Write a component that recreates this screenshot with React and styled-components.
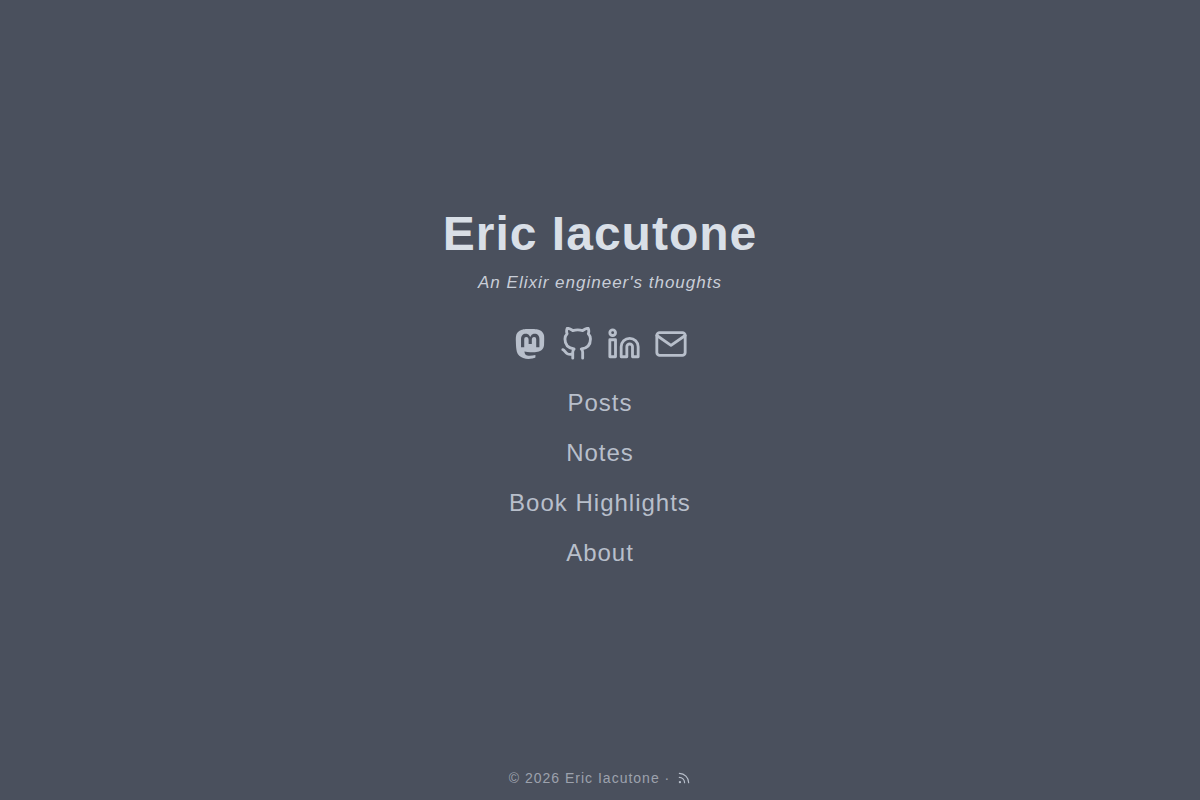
import React from 'react'
import styled, { createGlobalStyle } from 'styled-components'
import { FiGithub, FiLinkedin, FiMail, FiRss } from 'react-icons/fi'
import { SiMastodon } from 'react-icons/si'

const Color = {
  Background: '#4a505d',
  Title: '#d9dfe7',
  Tagline: '#c9ced8',
  Link: '#b8bfcb',
  Footer: '#9da2ad',
}

const GlobalStyle = createGlobalStyle`
  * {
    box-sizing: border-box;
  }

  body {
    margin: 0;
    background: ${Color.Background};
    font-family: "Liberation Sans", Arial, sans-serif;
    letter-spacing: 1px;
  }
`

const Page = styled.div`
  display: flex;
  flex-direction: column;
  min-height: 100vh;
`

const Main = styled.main`
  flex: 1;
  display: flex;
  flex-direction: column;
  align-items: center;
  justify-content: center;
  padding-top: 2px;
  text-align: center;
`

const Title = styled.h1`
  margin: 0;
  color: ${Color.Title};
  font-size: 48px;
  line-height: 56px;
`

const Tagline = styled.p`
  margin: 11px 0 34px;
  color: ${Color.Tagline};
  font-size: 17px;
  font-style: italic;
  line-height: 20px;
`

const SocialLinks = styled.div`
  display: flex;
  align-items: center;
  gap: 13px;
`

const SocialLink = styled.a`
  display: flex;
  align-items: center;
  justify-content: center;
  width: 34px;
  height: 34px;
  color: ${Color.Link};
`

const Menu = styled.ul`
  display: flex;
  flex-direction: column;
  gap: 22px;
  margin: 28px 0 0;
  padding: 0;
  list-style: none;
`

const MenuLink = styled.a`
  display: block;
  color: ${Color.Link};
  font-size: 24px;
  line-height: 28px;
  text-decoration: none;
`

const Footer = styled.footer`
  display: flex;
  align-items: center;
  justify-content: center;
  gap: 7px;
  padding-bottom: 14px;
  color: ${Color.Footer};
  font-size: 14px;
  line-height: 16px;
`

const FeedLink = styled.a`
  display: flex;
  color: ${Color.Link};
`

const socials = [
  { name: 'Mastodon', icon: <SiMastodon size={30} /> },
  { name: 'GitHub', icon: <FiGithub size={34} /> },
  { name: 'LinkedIn', icon: <FiLinkedin size={34} /> },
  { name: 'Email', icon: <FiMail size={34} /> },
]

const pages = ['Posts', 'Notes', 'Book Highlights', 'About']

export default function App() {
  return (
    <Page>
      <GlobalStyle />
      <Main>
        <Title>Eric Iacutone</Title>
        <Tagline>An Elixir engineer's thoughts</Tagline>
        <SocialLinks>
          {socials.map(({ name, icon }) => (
            <SocialLink key={name} href="#" aria-label={name}>{icon}</SocialLink>
          ))}
        </SocialLinks>
        <nav>
          <Menu>
            {pages.map((page) => (
              <li key={page}>
                <MenuLink href="#">{page}</MenuLink>
              </li>
            ))}
          </Menu>
        </nav>
      </Main>
      <Footer>
        <span>© 2026 Eric Iacutone ·</span>
        <FeedLink href="#" aria-label="RSS feed"><FiRss size={14} /></FeedLink>
      </Footer>
    </Page>
  )
}
